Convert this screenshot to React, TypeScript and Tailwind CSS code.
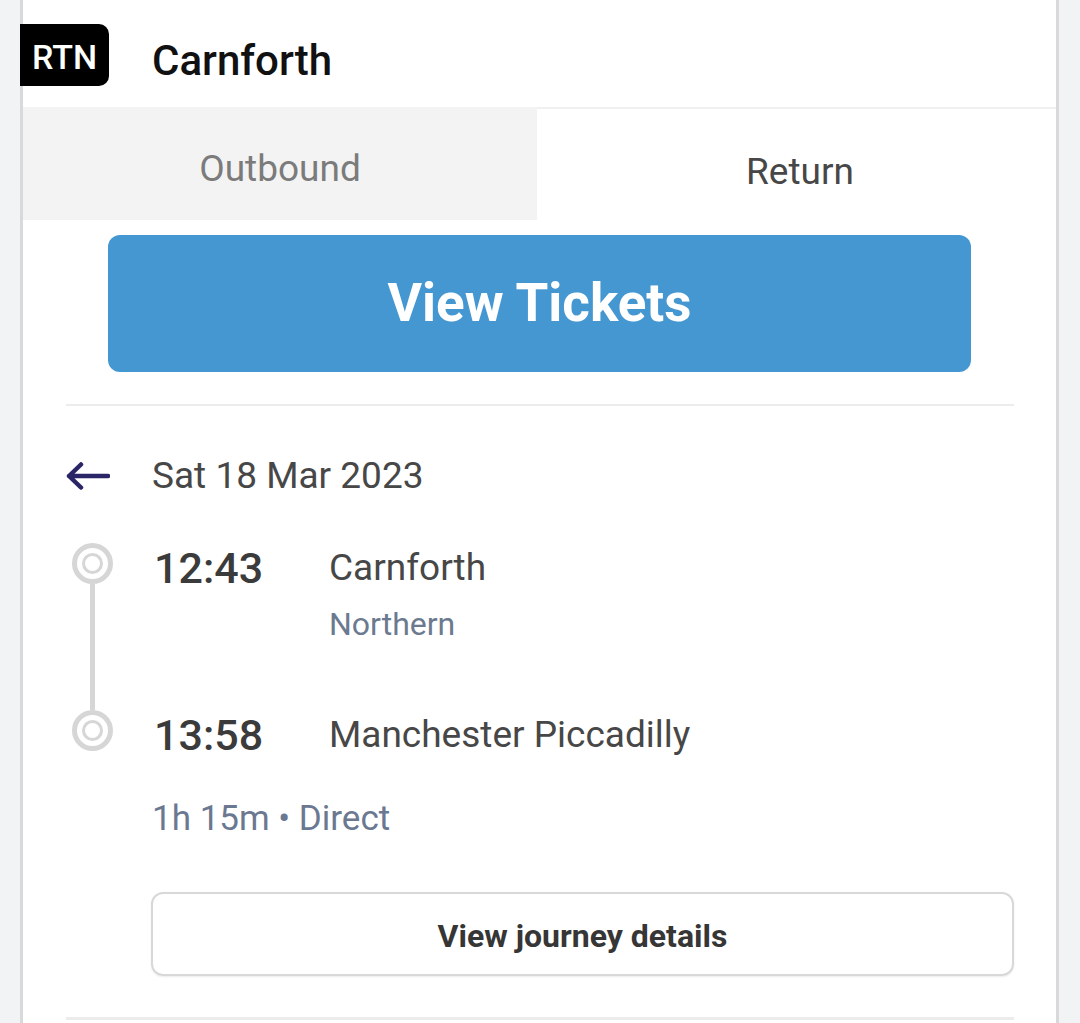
import React from "react";

function ArrowLeft() {
  return (
    <svg width="44" height="28" viewBox="0 0 44 28" fill="none">
      <path
        d="M42 14H3M15 2.5L3 14l12 11.5"
        stroke="#2a2566"
        strokeWidth="4.5"
        strokeLinecap="round"
        strokeLinejoin="round"
      />
    </svg>
  );
}

function StopDot() {
  return (
    <div className="w-[41px] h-[41px] rounded-full border-[5px] border-[#d6d6d6] flex items-center justify-center shrink-0">
      <div className="w-[21px] h-[21px] rounded-full border-[3px] border-[#d6d6d6]" />
    </div>
  );
}

export default function App() {
  return (
    <div
      className="min-h-screen bg-[#f2f3f5] pl-[20px] pr-[21px]"
      style={{ fontFamily: "Roboto, 'Noto Sans', sans-serif" }}
    >
      <div className="bg-white border-x-[3px] border-[#d9d9d9] min-h-screen pb-[20px]">
        {/* Header */}
        <div className="h-[107px] flex items-start">
          <div className="-ml-[3px] mt-[24px] w-[89px] h-[62px] bg-black rounded-r-[10px] flex items-center justify-center pt-[3px]">
            <span className="text-white text-[34px] font-medium leading-none">
              RTN
            </span>
          </div>
          <div className="ml-[43px] mt-[36px] text-[42px] leading-[50px] font-medium text-[#111111]">
            Carnforth
          </div>
        </div>

        {/* Tabs */}
        <div className="flex h-[113px]">
          <div className="w-[514px] bg-[#f3f3f3] flex items-center justify-center pt-[10px]">
            <span className="text-[37px] leading-[44px] text-[#7b7b7b]">Outbound</span>
          </div>
          <div className="flex-1 border-t-2 border-[#f0f0f0] flex items-center justify-center pt-[15px] pl-[7px]">
            <span className="text-[37px] leading-[44px] text-[#474747]">Return</span>
          </div>
        </div>

        {/* View Tickets */}
        <div className="mt-[15px] mx-[85px] h-[137px] rounded-[12px] bg-[#4597d2] flex items-center justify-center">
          <span className="text-white text-[53px] font-bold leading-none">View Tickets</span>
        </div>

        <div className="mt-[32px] ml-[43px] mr-[42px] h-[2px] bg-[#ececec]" />

        {/* Journey */}
        <div className="pl-[43px] pr-[42px]">
          <div className="mt-[50px] h-[40px] flex items-center">
            <div className="w-[86px] flex items-center">
              <ArrowLeft />
            </div>
            <span className="text-[37px] leading-[40px] text-[#474747]">Sat 18 Mar 2023</span>
          </div>

          <div className="mt-[47px] flex items-start">
            <div className="w-[52px] flex flex-col items-center">
              <StopDot />
              <div className="w-[5px] h-[126px] bg-[#d6d6d6]" />
              <StopDot />
            </div>
            <div className="ml-[34px] flex flex-col">
              <div className="flex">
                <div className="w-[177px] pl-[2px] text-[43px] leading-[50px] font-medium text-[#3b3b3b]">12:43</div>
                <div className="text-[37px] leading-[50px] text-[#474747]">Carnforth</div>
              </div>
              <div className="flex mt-[11px]">
                <div className="w-[177px]" />
                <div className="text-[32px] leading-[40px] text-[#6b7a8f]">Northern</div>
              </div>
              <div className="flex mt-[66px]">
                <div className="w-[177px] pl-[2px] text-[43px] leading-[50px] font-medium text-[#3b3b3b]">13:58</div>
                <div className="text-[37px] leading-[50px] text-[#474747]">Manchester Piccadilly</div>
              </div>
            </div>
          </div>

          <div className="mt-[39px] pl-[86px] text-[35px] leading-[40px] text-[#6b7891]">
            1h 15m • Direct
          </div>

          <div className="mt-[53px] ml-[85px] h-[84px] rounded-[12px] border-2 border-[#d8d8d8] shadow-[0_1px_2px_rgba(0,0,0,0.08)] flex items-center justify-center pt-[4px]">
            <span className="text-[32px] font-bold leading-none text-[#363636]">View journey details</span>
          </div>

          <div className="mt-[41px] h-[3px] bg-[#ececec]" />
        </div>
      </div>
    </div>
  );
}
